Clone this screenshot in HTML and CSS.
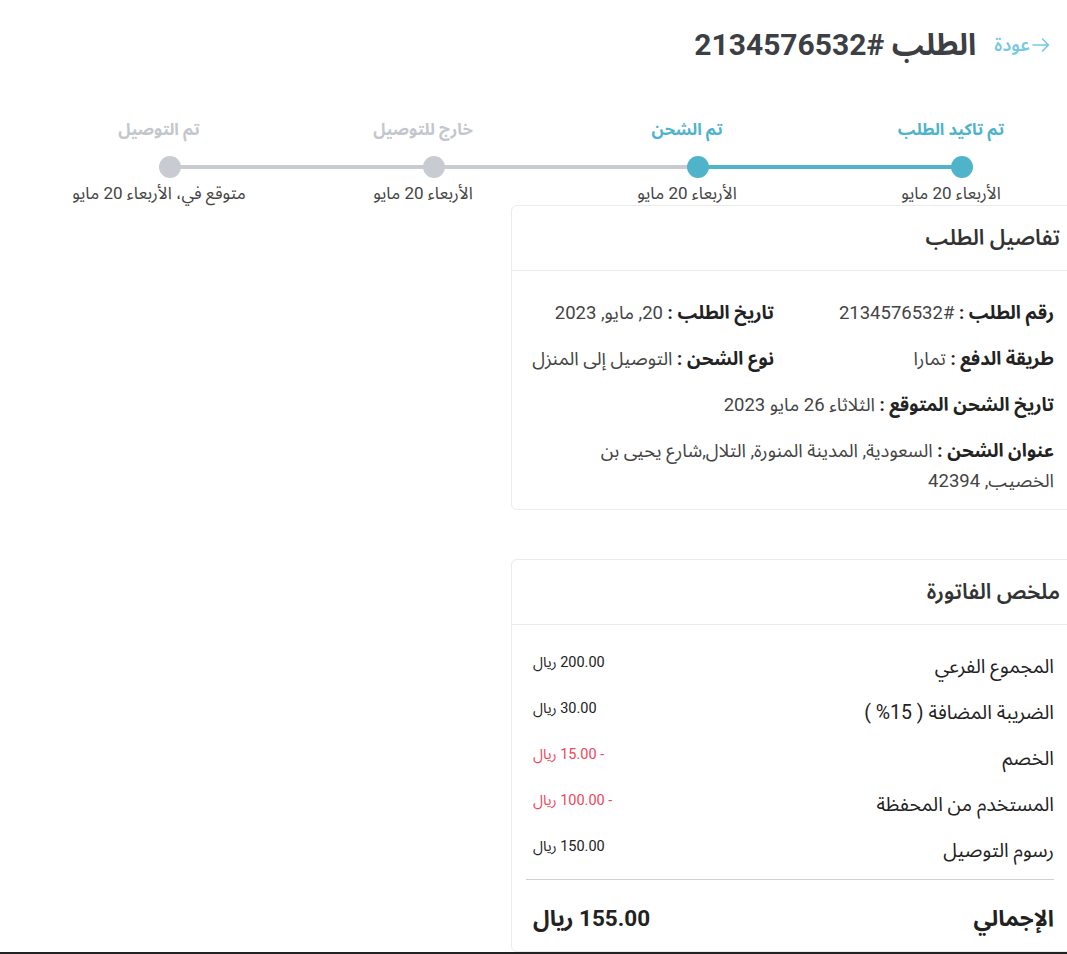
FILE: index.html
```html
<!DOCTYPE html>
<html lang="ar" dir="rtl">
<head>
<meta charset="utf-8">
<title>الطلب</title>
<link rel="stylesheet" href="styles.css">
</head>
<body>
<main class="page">
  <header class="page-head">
    <a class="back" href="#">
      <svg class="back-icon" width="18" height="14" viewBox="0 0 18 14" aria-hidden="true"><path d="M1 7H16.5M10.5 1L16.5 7L10.5 13" fill="none" stroke="currentColor" stroke-width="1.6" stroke-linecap="round" stroke-linejoin="round"/></svg>
      <span>عودة</span>
    </a>
    <h1 class="title">الطلب #2134576532</h1>
  </header>

  <ol class="stepper">
    <li class="step done">
      <div class="step-label">تم تاكيد الطلب</div>
      <div class="step-track"><span class="dot"></span></div>
      <div class="step-date">الأربعاء 20 مايو</div>
    </li>
    <li class="step done">
      <div class="step-label">تم الشحن</div>
      <div class="step-track"><span class="dot"></span></div>
      <div class="step-date">الأربعاء 20 مايو</div>
    </li>
    <li class="step">
      <div class="step-label">خارج للتوصيل</div>
      <div class="step-track"><span class="dot"></span></div>
      <div class="step-date">الأربعاء 20 مايو</div>
    </li>
    <li class="step last">
      <div class="step-label">تم التوصيل</div>
      <div class="step-track"><span class="dot"></span></div>
      <div class="step-date">متوقع في، الأربعاء 20 مايو</div>
    </li>
  </ol>

  <section class="cards">
    <article class="card">
      <h2 class="card-head">تفاصيل الطلب</h2>
      <div class="card-body details">
        <div class="detail-grid">
          <p class="detail"><b>رقم الطلب :</b> #2134576532</p>
          <p class="detail"><b>تاريخ الطلب :</b> 20, مايو, 2023</p>
          <p class="detail"><b>طريقة الدفع :</b> تمارا</p>
          <p class="detail"><b>نوع الشحن :</b> التوصيل إلى المنزل</p>
          <p class="detail wide"><b>تاريخ الشحن المتوقع :</b> الثلاثاء 26 مايو 2023</p>
          <p class="detail wide address"><b>عنوان الشحن :</b> السعودية, المدينة المنورة, التلال,شارع يحيى بن الخصيب, 42394</p>
        </div>
      </div>
    </article>

    <article class="card invoice">
      <h2 class="card-head">ملخص الفاتورة</h2>
      <div class="card-body">
        <ul class="lines">
          <li class="line"><span class="line-label">المجموع الفرعي</span><span class="line-value">200.00 ريال</span></li>
          <li class="line"><span class="line-label">الضريبة المضافة ( 15% )</span><span class="line-value">30.00 ريال</span></li>
          <li class="line"><span class="line-label">الخصم</span><span class="line-value neg">- 15.00 ريال</span></li>
          <li class="line"><span class="line-label">المستخدم من المحفظة</span><span class="line-value neg">- 100.00 ريال</span></li>
          <li class="line"><span class="line-label">رسوم التوصيل</span><span class="line-value">150.00 ريال</span></li>
        </ul>
        <div class="total"><span>الإجمالي</span><span>155.00 ريال</span></div>
      </div>
    </article>
  </section>
</main>
<footer class="footer"></footer>
</body>
</html>
```

FILE: styles.css
```css
* { box-sizing: border-box; }
html, body { margin: 0; padding: 0; }
body {
  background: #fff;
  color: #333;
  font-family: Roboto, "Noto Sans Arabic", "DejaVu Sans", sans-serif;
  overflow-x: hidden;
}
.page { padding-top: 25px; }

.page-head {
  display: flex;
  align-items: center;
  gap: 18px;
  padding-right: 17px;
  height: 40px;
}
.back {
  display: flex;
  align-items: center;
  gap: 2px;
  color: #78c9df;
  text-decoration: none;
  font-size: 18px;
  font-weight: 600;
}
.back-icon { display: block; }
.title {
  margin: 0;
  font-size: 30px;
  line-height: 40px;
  font-weight: 700;
  color: #3c3f44;
}

.stepper {
  list-style: none;
  margin: 54px -16px 2px 0;
  padding: 0;
  display: flex;
}
.step {
  width: 264px;
  flex: none;
  text-align: center;
}
.step-label {
  font-size: 16.5px;
  line-height: 22px;
  font-weight: 700;
  color: #c3c7cd;
}
.step.done .step-label { color: #4fb3ca; }
.step-track {
  position: relative;
  height: 22px;
  margin-top: 15px;
  display: flex;
  justify-content: center;
  padding-left: 22px;
}
.step-track::after {
  content: "";
  position: absolute;
  top: 9px;
  right: calc(50% - 11px);
  width: 264px;
  height: 4px;
  background: #c8ccd2;
}
.step.done .step-track::after { background: #4fb4ca; }
.step.last .step-track::after { display: none; }
.step:nth-child(2) .step-track::after { background: #c8ccd2; }
.dot {
  position: relative;
  z-index: 1;
  width: 22px;
  height: 22px;
  border-radius: 50%;
  background: #c8ccd2;
}
.step.done .dot { background: #4fb4ca; }
.step-date {
  margin-top: 5px;
  font-size: 17px;
  line-height: 20px;
  color: #444;
}

.cards {
  width: 566px;
  margin-right: -10px;
  display: flex;
  flex-direction: column;
  gap: 49px;
}
.card {
  border: 1px solid #ebebeb;
  border-radius: 6px;
  background: #fff;
}
.card-head {
  margin: 0;
  height: 65px;
  display: flex;
  align-items: center;
  padding-right: 16px;
  font-size: 21.5px;
  font-weight: 600;
  color: #333;
  border-bottom: 1px solid #ebebeb;
}
.card-body { padding: 27px 22px 13px 14px; }
.detail-grid {
  display: grid;
  grid-template-columns: 280px 1fr;
  row-gap: 16px;
}
.detail {
  margin: 0;
  font-size: 18.5px;
  line-height: 30px;
  color: #444;
}
.detail b { color: #222; font-weight: 700; }
.detail.wide { grid-column: 1 / -1; }
.detail.address { padding-left: 56px; }

.invoice .card-body { padding-bottom: 18px; }
.lines {
  list-style: none;
  margin: 0;
  padding: 0 0 13px;
  display: flex;
  flex-direction: column;
  gap: 16px;
  border-bottom: 1px solid #cfd1d4;
}
.line {
  display: flex;
  justify-content: space-between;
  align-items: flex-start;
  padding-left: 7px;
}
.line-label {
  font-size: 19.5px;
  line-height: 30px;
  color: #222;
}
.line-value {
  font-size: 14.5px;
  line-height: 22px;
  color: #222;
}
.line-value.neg { color: #f0465a; }
.total {
  display: flex;
  justify-content: space-between;
  margin-top: 23px;
  padding-left: 7px;
  font-size: 22.5px;
  line-height: 30px;
  font-weight: 700;
  color: #222;
}

.footer {
  height: 120px;
  background: #222;
}
```
